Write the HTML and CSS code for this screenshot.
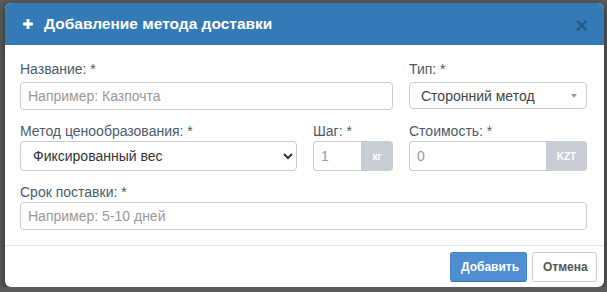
FILE: index.html
```html
<!DOCTYPE html>
<html lang="ru">
<head>
  <meta charset="UTF-8" />
  <meta name="viewport" content="width=device-width, initial-scale=1.0" />
  <title>Добавление метода доставки</title>
  <link rel="stylesheet" href="styles.css">
</head>
<body>
  <div class="modal">
    <div class="modal-header">
      <svg class="plus" width="10" height="10" viewBox="0 0 10 10"><rect x="3.5" y="0" width="3" height="10" fill="#fff"/><rect x="0" y="3.5" width="10" height="3" fill="#fff"/></svg>
      <h4 class="modal-title">Добавление метода доставки</h4>
      <span class="close">×</span>
    </div>

    <div class="modal-body">
      <div class="field span-2">
        <label>Название: *</label>
        <input class="control" placeholder="Например: Казпочта" />
      </div>
      <div class="field">
        <label>Тип: *</label>
        <div class="control fake-select">Сторонний метод <span class="caret"></span></div>
      </div>

      <div class="field tight">
        <label>Метод ценообразования: *</label>
        <select class="control native">
          <option>Фиксированный вес</option>
        </select>
      </div>
      <div class="field tight">
        <label>Шаг: *</label>
        <div class="input-group">
          <input class="control" value="1" />
          <span class="addon addon-kg">кг</span>
        </div>
      </div>
      <div class="field tight">
        <label>Стоимость: *</label>
        <div class="input-group">
          <input class="control" value="0" />
          <span class="addon addon-kzt">KZT</span>
        </div>
      </div>

      <div class="field tight span-3">
        <label>Срок поставки: *</label>
        <input class="control" placeholder="Например: 5-10 дней" />
      </div>
    </div>

    <div class="modal-footer">
      <button class="btn btn-primary">Добавить</button>
      <button class="btn btn-default">Отмена</button>
    </div>
  </div>
</body>
</html>
```

FILE: styles.css
```css
* { box-sizing: border-box; }
body { margin: 0; background: #5a5a5a; font-family: "Liberation Sans", Arial, sans-serif; font-size: 14px; color: #333; }

.modal { margin: 3px 0 0 5px; width: 599px; background: #fff; border-radius: 6px; overflow: hidden; box-shadow: 0 3px 9px rgba(0,0,0,.5); }

.modal-header { height: 42px; background: #337ab7; display: flex; align-items: center; padding: 0 16px 0 18px; }
.plus { margin-right: 11px; }
.modal-title { margin: 0; flex: 1; color: #fff; font-size: 15.5px; font-weight: bold; }
.close { color: #255a87; font-size: 22px; font-weight: bold; line-height: 1; margin-top: 3px; }

.modal-body { padding: 16px 17px 15px 15px; display: grid; grid-template-columns: 277px 80px 178px; column-gap: 16px; row-gap: 13px; }
.field { display: flex; flex-direction: column; }
.span-2 { grid-column: span 2; }
.span-3 { grid-column: span 3; }
.field label { color: #4b5b6c; font-size: 14px; line-height: 17px; margin-bottom: 4px; }
.tight label { margin-bottom: 1px; }

.control { height: 28px; border: 1px solid #ccc; border-radius: 4px; padding: 0 7px; font: inherit; font-size: 14px; color: #555; background: #fff; }
.control::placeholder { color: #999; }
.fake-select { display: flex; align-items: center; justify-content: space-between; padding: 0 9px 0 11px; color: #444; height: 27px; }
.caret { width: 0; height: 0; border-left: 3.5px solid transparent; border-right: 3.5px solid transparent; border-top: 4px solid #999; }
.native { height: 30px; padding: 0 4px 0 8px; color: #333; }

.input-group { display: flex; }
.input-group .control { flex: 1; min-width: 0; border-radius: 4px 0 0 4px; border-right: 0; color: #999; height: 30px; }
.addon { background: #c8cdd5; color: #fff; font-size: 10px; font-weight: bold; display: flex; align-items: center; justify-content: center; border-radius: 0 4px 4px 0; }
.addon-kg { width: 32px; }
.addon-kzt { width: 41px; }

.modal-footer { border-top: 1px solid #e5e5e5; padding: 6px 7px 5px; display: flex; justify-content: flex-end; gap: 5px; }
.btn { height: 30px; border-radius: 3px; font: inherit; font-size: 12px; font-weight: bold; padding: 0 10px; }
.btn-primary { background: #4f8fd1; border: 1px solid #4585c6; border-bottom-color: #3a73ad; color: #fff; width: 77px; }
.btn-default { background: #fff; border: 1px solid #ccc; color: #555; width: 65px; }
```
